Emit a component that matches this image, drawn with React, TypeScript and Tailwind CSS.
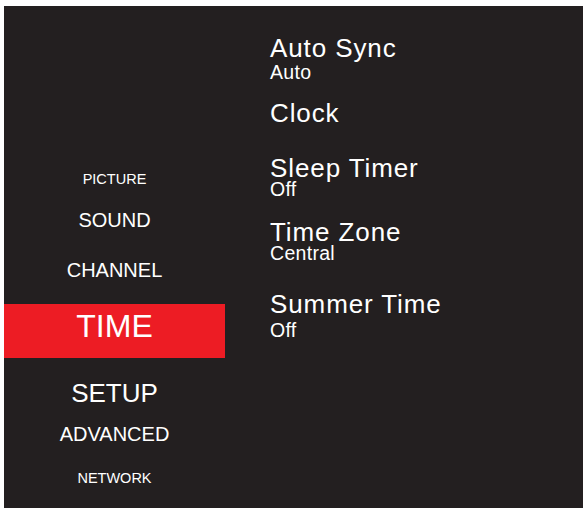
import React from 'react';

interface MenuItem {
  label: string;
  size: string;
  gap: string;
}

interface Setting {
  title: string;
  value?: string;
  gap: string;
  valueGap?: string;
}

const categories: MenuItem[] = [
  { label: 'PICTURE', size: 'text-[14.5px] leading-[20px] h-[20px]', gap: 'mt-[162.7px]' },
  { label: 'SOUND', size: 'text-[20px] leading-[24px] h-[24px]', gap: 'mt-[19.2px]' },
  { label: 'CHANNEL', size: 'text-[20px] leading-[24px] h-[24px]', gap: 'mt-[25.9px]' },
];

const afterActive: MenuItem[] = [
  { label: 'SETUP', size: 'text-[26px] leading-[30px] h-[30px]', gap: 'mt-[20px]' },
  { label: 'ADVANCED', size: 'text-[20px] leading-[24px] h-[24px]', gap: 'mt-[14.1px]' },
  { label: 'NETWORK', size: 'text-[14.5px] leading-[20px] h-[20px]', gap: 'mt-[22.2px]' },
];

const settings: Setting[] = [
  { title: 'Auto Sync', value: 'Auto', gap: 'mt-[29.7px]', valueGap: 'mt-[4.5px]' },
  { title: 'Clock', gap: 'mt-[19.4px]' },
  { title: 'Sleep Timer', value: 'Off', gap: 'mt-[31px]', valueGap: 'mt-[1.7px]' },
  { title: 'Time Zone', value: 'Central', gap: 'mt-[22.2px]', valueGap: 'mt-[0.7px]' },
  { title: 'Summer Time', value: 'Off', gap: 'mt-[29.8px]', valueGap: 'mt-[5.7px]' },
];

const App: React.FC = () => {
  return (
    <div className="w-[588px] h-[516px] bg-white pl-[4px] pt-[6px]" style={{ fontFamily: '"Liberation Sans", Arial, sans-serif' }}>
      <div className="w-[579px] h-[502px] bg-[#231f20] text-white flex">
        {/* category column */}
        <div className="w-[221px] flex flex-col">
          {categories.map((item) => (
            <div key={item.label} className={`${item.gap} ${item.size} text-center`}>
              {item.label}
            </div>
          ))}
          <div className="mt-[22.2px] h-[54px] bg-[#ed1c24] text-center text-[32px] leading-[45px]">
            TIME
          </div>
          {afterActive.map((item) => (
            <div key={item.label} className={`${item.gap} ${item.size} text-center`}>
              {item.label}
            </div>
          ))}
        </div>

        {/* settings column */}
        <div className="flex-1 flex flex-col pl-[45px]">
          {settings.map((s) => (
            <div key={s.title} className={s.gap}>
              <div className="text-[26px] leading-[24px] h-[24px] tracking-[0.9px] whitespace-nowrap">{s.title}</div>
              {s.value && (
                <div className={`${s.valueGap} text-[19.5px] leading-[17px] h-[17px] tracking-[0.3px]`}>{s.value}</div>
              )}
            </div>
          ))}
        </div>
      </div>
    </div>
  );
};

export default App;
